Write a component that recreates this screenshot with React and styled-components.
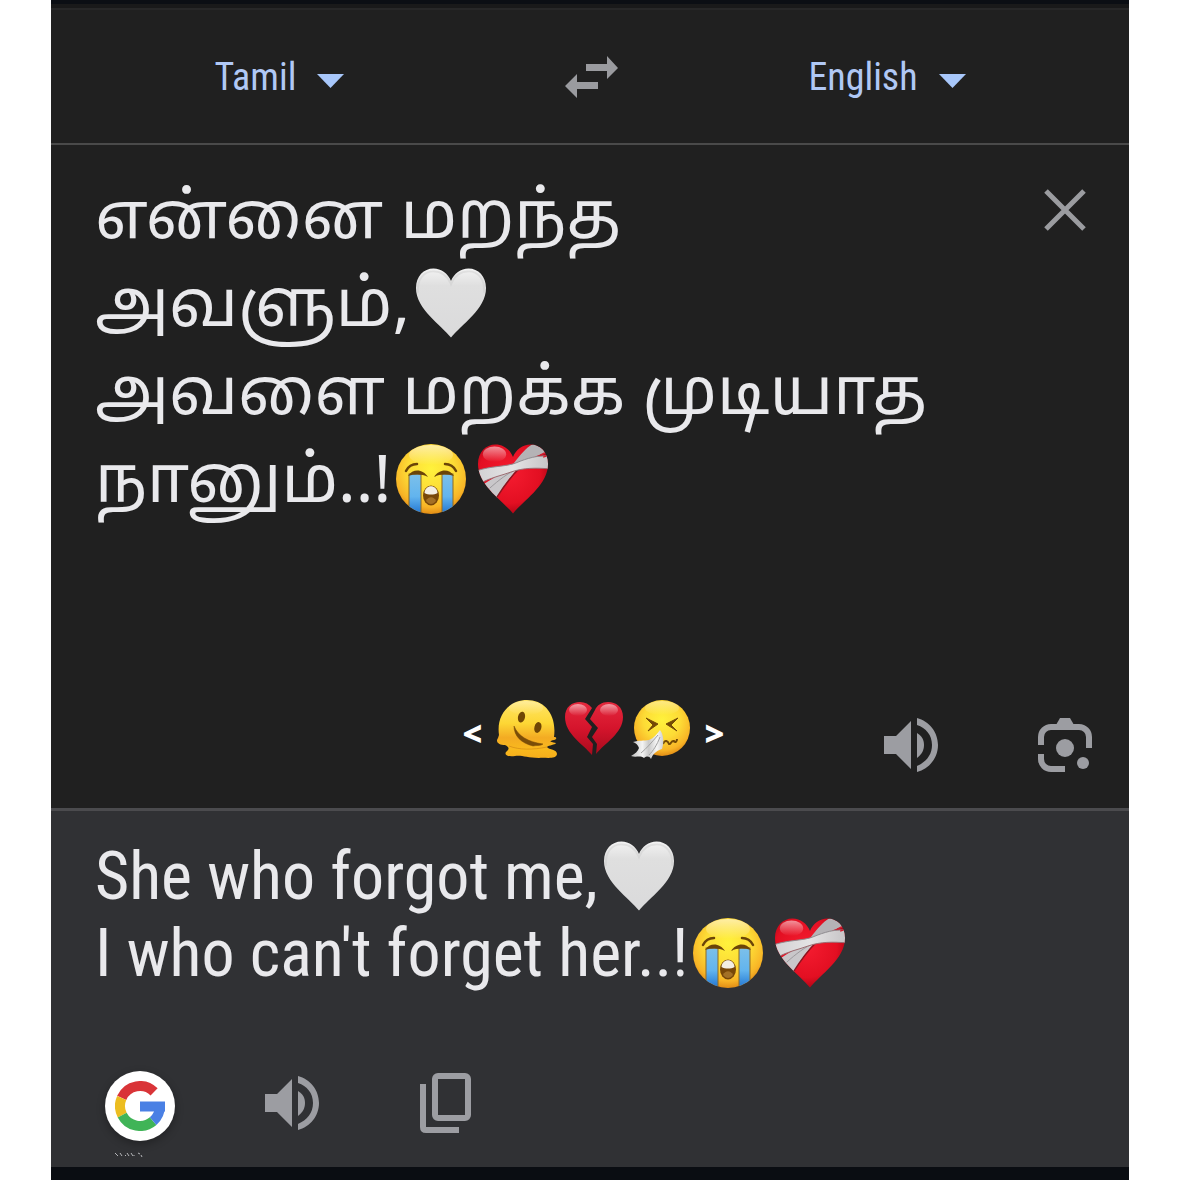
import React, { useState } from 'react';
import styled, { createGlobalStyle } from 'styled-components';

const GlobalStyle = createGlobalStyle`
  * {
    box-sizing: border-box;
  }

  body {
    margin: 0;
    background: #fff;
  }

  button {
    display: flex;
    padding: 0;
    border: 0;
    background: none;
    cursor: pointer;
  }

  svg {
    display: block;
  }
`;

const Screen = styled.main`
  margin: 0 51px;
  background: #202020;
  border-top: 4px solid #0b0e14;
  border-bottom: 13px solid #0a0d12;
  font-family: 'Roboto Condensed', Roboto, sans-serif;
`;

const StatusEdge = styled.div`
  height: 6px;
  background: #19191a;
  border-bottom: 2px solid #272728;
`;

const LanguageBar = styled.header`
  display: flex;
  align-items: center;
  justify-content: center;
  height: 135px;
  border-bottom: 2px solid #4a4a4a;
`;

const Picker = styled.label`
  display: flex;
  align-items: center;
  gap: 21px;
`;

const LanguageSelect = styled.select`
  appearance: none;
  field-sizing: content;
  padding: 0;
  border: 0;
  background: none;
  color: #b0c8f5;
  font-family: inherit;
  font-size: 38px;
  line-height: 48px;
`;

const SwapButton = styled.button`
  margin: 0 190px 0 221px;
`;

const SourcePanel = styled.section`
  padding: 23px 37px 36px 44px;
  border-bottom: 3px solid #4b4b4e;
`;

const SourceTop = styled.div`
  display: flex;
  align-items: flex-start;
  justify-content: space-between;
`;

const Phrase = styled.p`
  margin: 0;
  color: #e9e9ec;
  font-size: 66px;
  line-height: ${({ $leading }) => $leading}px;
  font-family: ${({ $tamil }) =>
    $tamil ? "'Noto Sans', 'Noto Sans Tamil', sans-serif" : 'inherit'};
`;

const InlineEmoji = styled.svg`
  display: inline-block;
  width: 72px;
  height: 72px;
  margin: 0 ${({ $gap }) => $gap || 4}px;
  vertical-align: -13px;
`;

const CloseButton = styled.button`
  margin: 21px 6px 0 0;
`;

const SourceFooter = styled.div`
  display: grid;
  grid-template-columns: 1fr auto 1fr;
  align-items: end;
  margin-top: 179px;
`;

const Caption = styled.div`
  display: flex;
  grid-column: 2;
  align-items: flex-end;
  gap: 7px;
  padding-bottom: 13px;
`;

const Bracket = styled.span`
  margin: 0 7px;
  color: #fff;
  font: 800 34px/52px 'Open Sans', 'Noto Sans', sans-serif;
`;

const CaptionEmoji = styled.svg`
  width: 60px;
  height: 60px;
`;

const SourceActions = styled.div`
  display: flex;
  justify-content: flex-end;
  gap: 100px;
`;

const ResultPanel = styled.section`
  padding: 27px 44px 10px;
  background: #303134;
`;

const ResultActions = styled.div`
  display: flex;
  align-items: center;
  margin: 79px 0 11px 10px;
`;

const ActionGroup = styled.div`
  display: flex;
  align-items: center;
  gap: 101px;
  margin-left: 90px;
  padding-bottom: 6px;
`;

const GoogleButton = styled.button`
  align-items: center;
  justify-content: center;
  width: 70px;
  height: 70px;
  border-radius: 50%;
  background: #fff;
  box-shadow: 0 3px 8px rgba(0, 0, 0, 0.3);
`;

const Specks = styled.svg`
  margin-left: 20px;
`;

const HEART = 'M37 72C27 59 1 43 1 21C1 9 9 1 19 1C27 1 34 6 37 14C40 6 47 1 55 1C65 1 73 9 73 21C73 43 47 59 37 72Z';

const Paints = () => (
  <svg width="0" height="0" style={{ position: 'absolute' }} aria-hidden="true">
    <defs>
      <radialGradient id="face" cx="0.5" cy="0.36" r="0.66">
        <stop offset="0" stopColor="#fff23c" />
        <stop offset="0.5" stopColor="#fddb36" />
        <stop offset="0.82" stopColor="#f8b426" />
        <stop offset="1" stopColor="#dc8412" />
      </radialGradient>
      <linearGradient id="shine" x1="0" y1="0" x2="0" y2="1">
        <stop offset="0" stopColor="#fff" stopOpacity="0.55" />
        <stop offset="1" stopColor="#fff" stopOpacity="0" />
      </linearGradient>
      <linearGradient id="tear" x1="0" y1="0" x2="0" y2="1">
        <stop offset="0" stopColor="#7cc0ea" />
        <stop offset="0.55" stopColor="#62b4ee" />
        <stop offset="1" stopColor="#1d71cf" />
      </linearGradient>
      <linearGradient id="white" x1="0" y1="0" x2="0" y2="1">
        <stop offset="0" stopColor="#f3f3f3" />
        <stop offset="0.25" stopColor="#dfdfdf" />
        <stop offset="1" stopColor="#dadadb" />
      </linearGradient>
      <radialGradient id="red" cx="0.45" cy="0.42" r="0.62">
        <stop offset="0" stopColor="#f51c30" />
        <stop offset="0.7" stopColor="#e30f22" />
        <stop offset="1" stopColor="#a90414" />
      </radialGradient>
      <linearGradient id="crimson" x1="0" y1="0" x2="0" y2="1">
        <stop offset="0" stopColor="#e4283c" />
        <stop offset="0.5" stopColor="#d5142c" />
        <stop offset="1" stopColor="#a80b1d" />
      </linearGradient>
      <linearGradient id="bandage" x1="0" y1="0" x2="1" y2="0">
        <stop offset="0" stopColor="#d2d1d3" />
        <stop offset="0.5" stopColor="#e4e3e4" />
        <stop offset="1" stopColor="#c6c4c6" />
      </linearGradient>
      <linearGradient id="melt" x1="0" y1="0" x2="0" y2="1">
        <stop offset="0" stopColor="#ffe56a" />
        <stop offset="0.4" stopColor="#fdd735" />
        <stop offset="0.65" stopColor="#f3ab23" />
        <stop offset="0.85" stopColor="#f9b91d" />
        <stop offset="1" stopColor="#f6ae1b" />
      </linearGradient>
      <linearGradient id="tissue" x1="0" y1="0" x2="1" y2="0">
        <stop offset="0" stopColor="#bdbdbd" />
        <stop offset="0.35" stopColor="#f4f4f4" />
        <stop offset="0.55" stopColor="#c9c9c9" />
        <stop offset="0.8" stopColor="#f6f6f6" />
        <stop offset="1" stopColor="#cfcfcf" />
      </linearGradient>
      <clipPath id="faceClip">
        <circle cx="36" cy="36" r="35" />
      </clipPath>
      <clipPath id="heartClip">
        <path d={HEART} />
      </clipPath>
    </defs>
  </svg>
);

const WhiteHeart = () => (
  <InlineEmoji viewBox="0 0 74 73" role="img" aria-label="white heart" $gap={5}>
    <path d={HEART} fill="url(#white)" />
    <path
      d="M3 26C2 12 9 4 19 4C28 4 34 10 37 17C40 10 46 4 55 4C65 4 72 12 71 26"
      fill="none"
      stroke="#c8c8c8"
      strokeOpacity="0.4"
      strokeWidth="2"
    />
  </InlineEmoji>
);

const CryingFace = () => (
  <InlineEmoji viewBox="0 0 72 72" role="img" aria-label="loudly crying face">
    <circle cx="36" cy="36" r="35" fill="url(#face)" />
    <ellipse cx="36" cy="12" rx="22" ry="10" fill="url(#shine)" />
    <g clipPath="url(#faceClip)">
      <rect x="14" y="31" width="12" height="41" fill="url(#tear)" stroke="#8d6a24" strokeWidth="1" />
      <rect x="47" y="31" width="11" height="41" fill="url(#tear)" stroke="#8d6a24" strokeWidth="1" />
    </g>
    <g fill="none" stroke="#6b4408" strokeLinecap="round">
      <path d="M11 28C13 24 17 21 22 21" strokeWidth="2.5" />
      <path d="M50 21C55 21 59 24 61 28" strokeWidth="2.5" />
    </g>
    <path d="M13 33C18 25 28 26 33 34C27 31 20 31 13 33Z" fill="#6b4408" />
    <path d="M39 34C44 26 54 25 59 33C52 31 45 31 39 34Z" fill="#6b4408" />
    <ellipse cx="36" cy="52.5" rx="8" ry="10" fill="#784708" />
    <path d="M29.5 50C30 41 42 41 42.5 50C39 52 33 52 29.5 50Z" fill="#f4eee2" />
    <path d="M31 58C33 53 39 53 41 58C38 62 34 62 31 58Z" fill="#a37025" />
  </InlineEmoji>
);

const MendingHeart = () => (
  <InlineEmoji viewBox="0 0 74 73" role="img" aria-label="mending heart" $gap={6}>
    <path d={HEART} fill="url(#red)" />
    <ellipse cx="18" cy="11" rx="12" ry="8" fill="url(#shine)" />
    <g clipPath="url(#heartClip)">
      <path d="M38 20C44 12 51 4 58 0L74 9C63 11 52 16 44 24Z" fill="#b5b3b6" />
      <path d="M5 43C16 36 28 28 44 24C35 33 27 44 20 57Z" fill="#c9c7ca" />
      <path d="M13 46C22 38 32 30 42 26" fill="none" stroke="#9b999c" strokeWidth="1" />
      <path d="M44 25C35 34 28 43 20 56" fill="none" stroke="#8b1520" strokeWidth="1.5" />
      <path d="M0 28C14 23 30 24 40 20C52 15 62 12 74 13V26C60 25 48 25 36 29C25 33 14 35 3 41Z" fill="url(#bandage)" />
      <path d="M0 28C14 23 30 24 40 20C52 15 62 12 74 13" fill="none" stroke="#8f8c90" strokeWidth="1" />
      <path d="M3 41C14 35 25 33 36 29C48 25 60 25 74 26" fill="none" stroke="#9a6a70" strokeWidth="1" />
      <path d="M65 12L71 9M68 14L74 12" stroke="#d21f30" strokeWidth="1.5" />
    </g>
  </InlineEmoji>
);

const MeltingFace = () => (
  <CaptionEmoji viewBox="0 0 60 60" role="img" aria-label="melting face">
    <path
      d="M2 36C-1 15 13 1 30 1C47 1 60 15 57 38C60 38 60 40 57 41C52 42 52 43 59 44C58 46 52 46 50 48C52 51 60 50 60 55C59 61 48 58 42 59C30 59 25 56 18 57C11 58 7 56 9 53C13 50 12 48 8 46C2 46 -2 43 1 39Z"
      fill="url(#melt)"
    />
    <ellipse cx="29" cy="9" rx="17" ry="7" fill="url(#shine)" opacity="0.6" />
    <path d="M12 47C22 51 36 51 50 48" fill="none" stroke="#cd8314" strokeWidth="1" strokeOpacity="0.6" />
    <ellipse cx="24.5" cy="18" rx="3.5" ry="5.5" fill="#6f4605" transform="rotate(14 24 18)" />
    <ellipse cx="41" cy="28.5" rx="3.5" ry="5.5" fill="#6f4605" transform="rotate(14 41 28)" />
    <path d="M17 27C21 37 31 43 46 45C44 47 40 46 36 47C24 44 17 37 17 27Z" fill="#7a4d08" stroke="#7a4d08" strokeWidth="0.5" />
  </CaptionEmoji>
);

const BrokenHeart = () => (
  <CaptionEmoji viewBox="-1 0 60 60" role="img" aria-label="broken heart">
    <path
      d="M27 56C18 45 0 35 0 18C0 8 7 3 15 3C20 3 24 5 27 9L20 20L27 28L22 38L28 45Z"
      fill="url(#crimson)"
    />
    <path
      d="M31 55C40 44 58 34 58 18C58 8 51 3 43 3C37 3 32 6 30 11L25 20L33 29L27 38L32 45Z"
      fill="url(#crimson)"
    />
    <ellipse cx="13" cy="11" rx="9" ry="6" fill="url(#shine)" />
    <ellipse cx="44" cy="11" rx="9" ry="6" fill="url(#shine)" />
  </CaptionEmoji>
);

const SneezingFace = () => (
  <CaptionEmoji viewBox="0 0 60 60" role="img" aria-label="sneezing face">
    <circle cx="31" cy="29" r="28" fill="url(#face)" />
    <ellipse cx="31" cy="9" rx="17" ry="7" fill="url(#shine)" opacity="0.7" />
    <path d="M15 19L27 25L17 32L22 26Z" fill="#744a06" stroke="#744a06" strokeWidth="1" strokeLinejoin="round" />
    <path d="M47 19L35 25L46 32L40 26Z" fill="#744a06" stroke="#744a06" strokeWidth="1" strokeLinejoin="round" />
    <path d="M32 45C34 40 37 42 38 45C40 46 40 41 43 42C44 44 46 43 46 40" fill="none" stroke="#744a06" strokeWidth="2" />
    <path
      d="M29 31C33 36 33 44 31 50C27 51 22 54 20 60C18 57 16 57 13 59C9 56 5 59 0 57C4 55 7 52 8 49C7 46 5 44 2 43C8 41 13 42 18 41C23 39 26 35 29 31Z"
      fill="url(#tissue)"
    />
    <path d="M27 36C21 43 15 50 10 54M29 38C26 46 22 52 18 56" fill="none" stroke="#a2a2a2" strokeWidth="1" />
  </CaptionEmoji>
);

const CaretIcon = () => (
  <svg width="27" height="25" viewBox="0 0 27 25" aria-hidden="true">
    <path d="M0 10H27L13.5 24Z" fill="#a8c7fa" />
  </svg>
);

const SwapIcon = () => (
  <svg width="53" height="42" viewBox="0 0 53 42" fill="#9a9b9f" aria-hidden="true">
    <path d="M21 8H42V0L53 12L42 23V15H21Z" />
    <path d="M33 33H12V42L0 30L12 18V26H33Z" />
  </svg>
);

const CloseIcon = () => (
  <svg width="42" height="42" viewBox="0 0 42 42" aria-hidden="true">
    <path d="M2 2L40 40M40 2L2 40" stroke="#9b9ca0" strokeWidth="5" />
  </svg>
);

const SpeakerIcon = () => (
  <svg width="54" height="54" viewBox="0 0 54 54" fill="#9c9da2" aria-hidden="true">
    <path d="M0 18H12L27 3V51L12 36H0Z" />
    <path d="M33 15C38 18 40 22 40 27C40 32 38 36 33 40Z" />
    <path d="M33 0C45 3 54 14 54 27C54 40 45 51 33 54V48C42 44 48 37 48 27C48 17 42 10 33 7Z" />
  </svg>
);

const LensIcon = () => (
  <svg width="54" height="54" viewBox="0 0 54 54" fill="#9c9da2" aria-hidden="true">
    <path
      d="M3 27V19A10 10 0 0 1 13 9H41A10 10 0 0 1 51 19V30M3 36V41A10 10 0 0 0 13 51H27"
      fill="none"
      stroke="#9c9da2"
      strokeWidth="6"
    />
    <path d="M18 7L22 0H32L36 7Z" />
    <circle cx="27" cy="30" r="9" />
    <circle cx="45" cy="45" r="6" />
  </svg>
);

const CopyIcon = () => (
  <svg width="52" height="60" viewBox="0 0 52 60" fill="none" stroke="#9c9da2" strokeWidth="6" aria-hidden="true">
    <rect x="15" y="3" width="33" height="42" rx="3" />
    <path d="M3 11V54Q3 57 6 57H39" />
  </svg>
);

const GoogleIcon = () => (
  <svg width="50" height="50" viewBox="0 0 50 50" fill="none" strokeWidth="10" aria-hidden="true">
    <path d="M39.1 10.9A20 20 0 0 0 6.7 16.9" stroke="#d93438" />
    <path d="M6.7 16.9A20 20 0 0 0 7.2 34.1" stroke="#ecbd20" />
    <path d="M7.2 34.1A20 20 0 0 0 38.1 40.1" stroke="#40b457" />
    <path d="M38.1 40.1A20 20 0 0 0 45 25" stroke="#4a80e4" />
    <path d="M25 25.5H50" stroke="#4a80e4" />
  </svg>
);

const LanguagePicker = ({ name, initial }) => {
  const [language, setLanguage] = useState(initial);

  return (
    <Picker>
      <LanguageSelect
        aria-label={name}
        value={language}
        onChange={(e) => setLanguage(e.target.value)}
      >
        <option>Tamil</option>
        <option>English</option>
      </LanguageSelect>
      <CaretIcon />
    </Picker>
  );
};

const App = () => (
  <>
    <GlobalStyle />
    <Paints />
    <Screen>
      <StatusEdge />
      <LanguageBar>
        <LanguagePicker name="Source language" initial="Tamil" />
        <SwapButton aria-label="Swap languages">
          <SwapIcon />
        </SwapButton>
        <LanguagePicker name="Target language" initial="English" />
      </LanguageBar>

      <SourcePanel>
        <SourceTop>
          <Phrase lang="ta" $tamil $leading={88}>
            என்னை மறந்த
            <br />
            அவளும்,
            <WhiteHeart />
            <br />
            அவளை மறக்க முடியாத
            <br />
            நானும்..!
            <CryingFace />
            <MendingHeart />
          </Phrase>
          <CloseButton aria-label="Clear text">
            <CloseIcon />
          </CloseButton>
        </SourceTop>
        <SourceFooter>
          <Caption>
            <Bracket>&lt;</Bracket>
            <MeltingFace />
            <BrokenHeart />
            <SneezingFace />
            <Bracket>&gt;</Bracket>
          </Caption>
          <SourceActions>
            <button aria-label="Listen to source">
              <SpeakerIcon />
            </button>
            <button aria-label="Search with camera">
              <LensIcon />
            </button>
          </SourceActions>
        </SourceFooter>
      </SourcePanel>

      <ResultPanel>
        <Phrase $leading={77}>
          She who forgot me,
          <WhiteHeart />
          <br />
          I who can't forget her..!
          <CryingFace />
          <MendingHeart />
        </Phrase>
        <ResultActions>
          <GoogleButton aria-label="Search Google">
            <GoogleIcon />
          </GoogleButton>
          <ActionGroup>
            <button aria-label="Listen to translation">
              <SpeakerIcon />
            </button>
            <button aria-label="Copy translation">
              <CopyIcon />
            </button>
          </ActionGroup>
        </ResultActions>
        <Specks width="28" height="5" viewBox="0 0 28 5" aria-hidden="true">
          <path
            d="M0 1L3 4M5 1L7 4M10 3L11 4M12 1L14 4M16 1L18 4M19 3V4M23 1L25 2M26 3L27 5"
            stroke="#b5b6b9"
            strokeWidth="1"
          />
        </Specks>
      </ResultPanel>
    </Screen>
  </>
);

export default App;
